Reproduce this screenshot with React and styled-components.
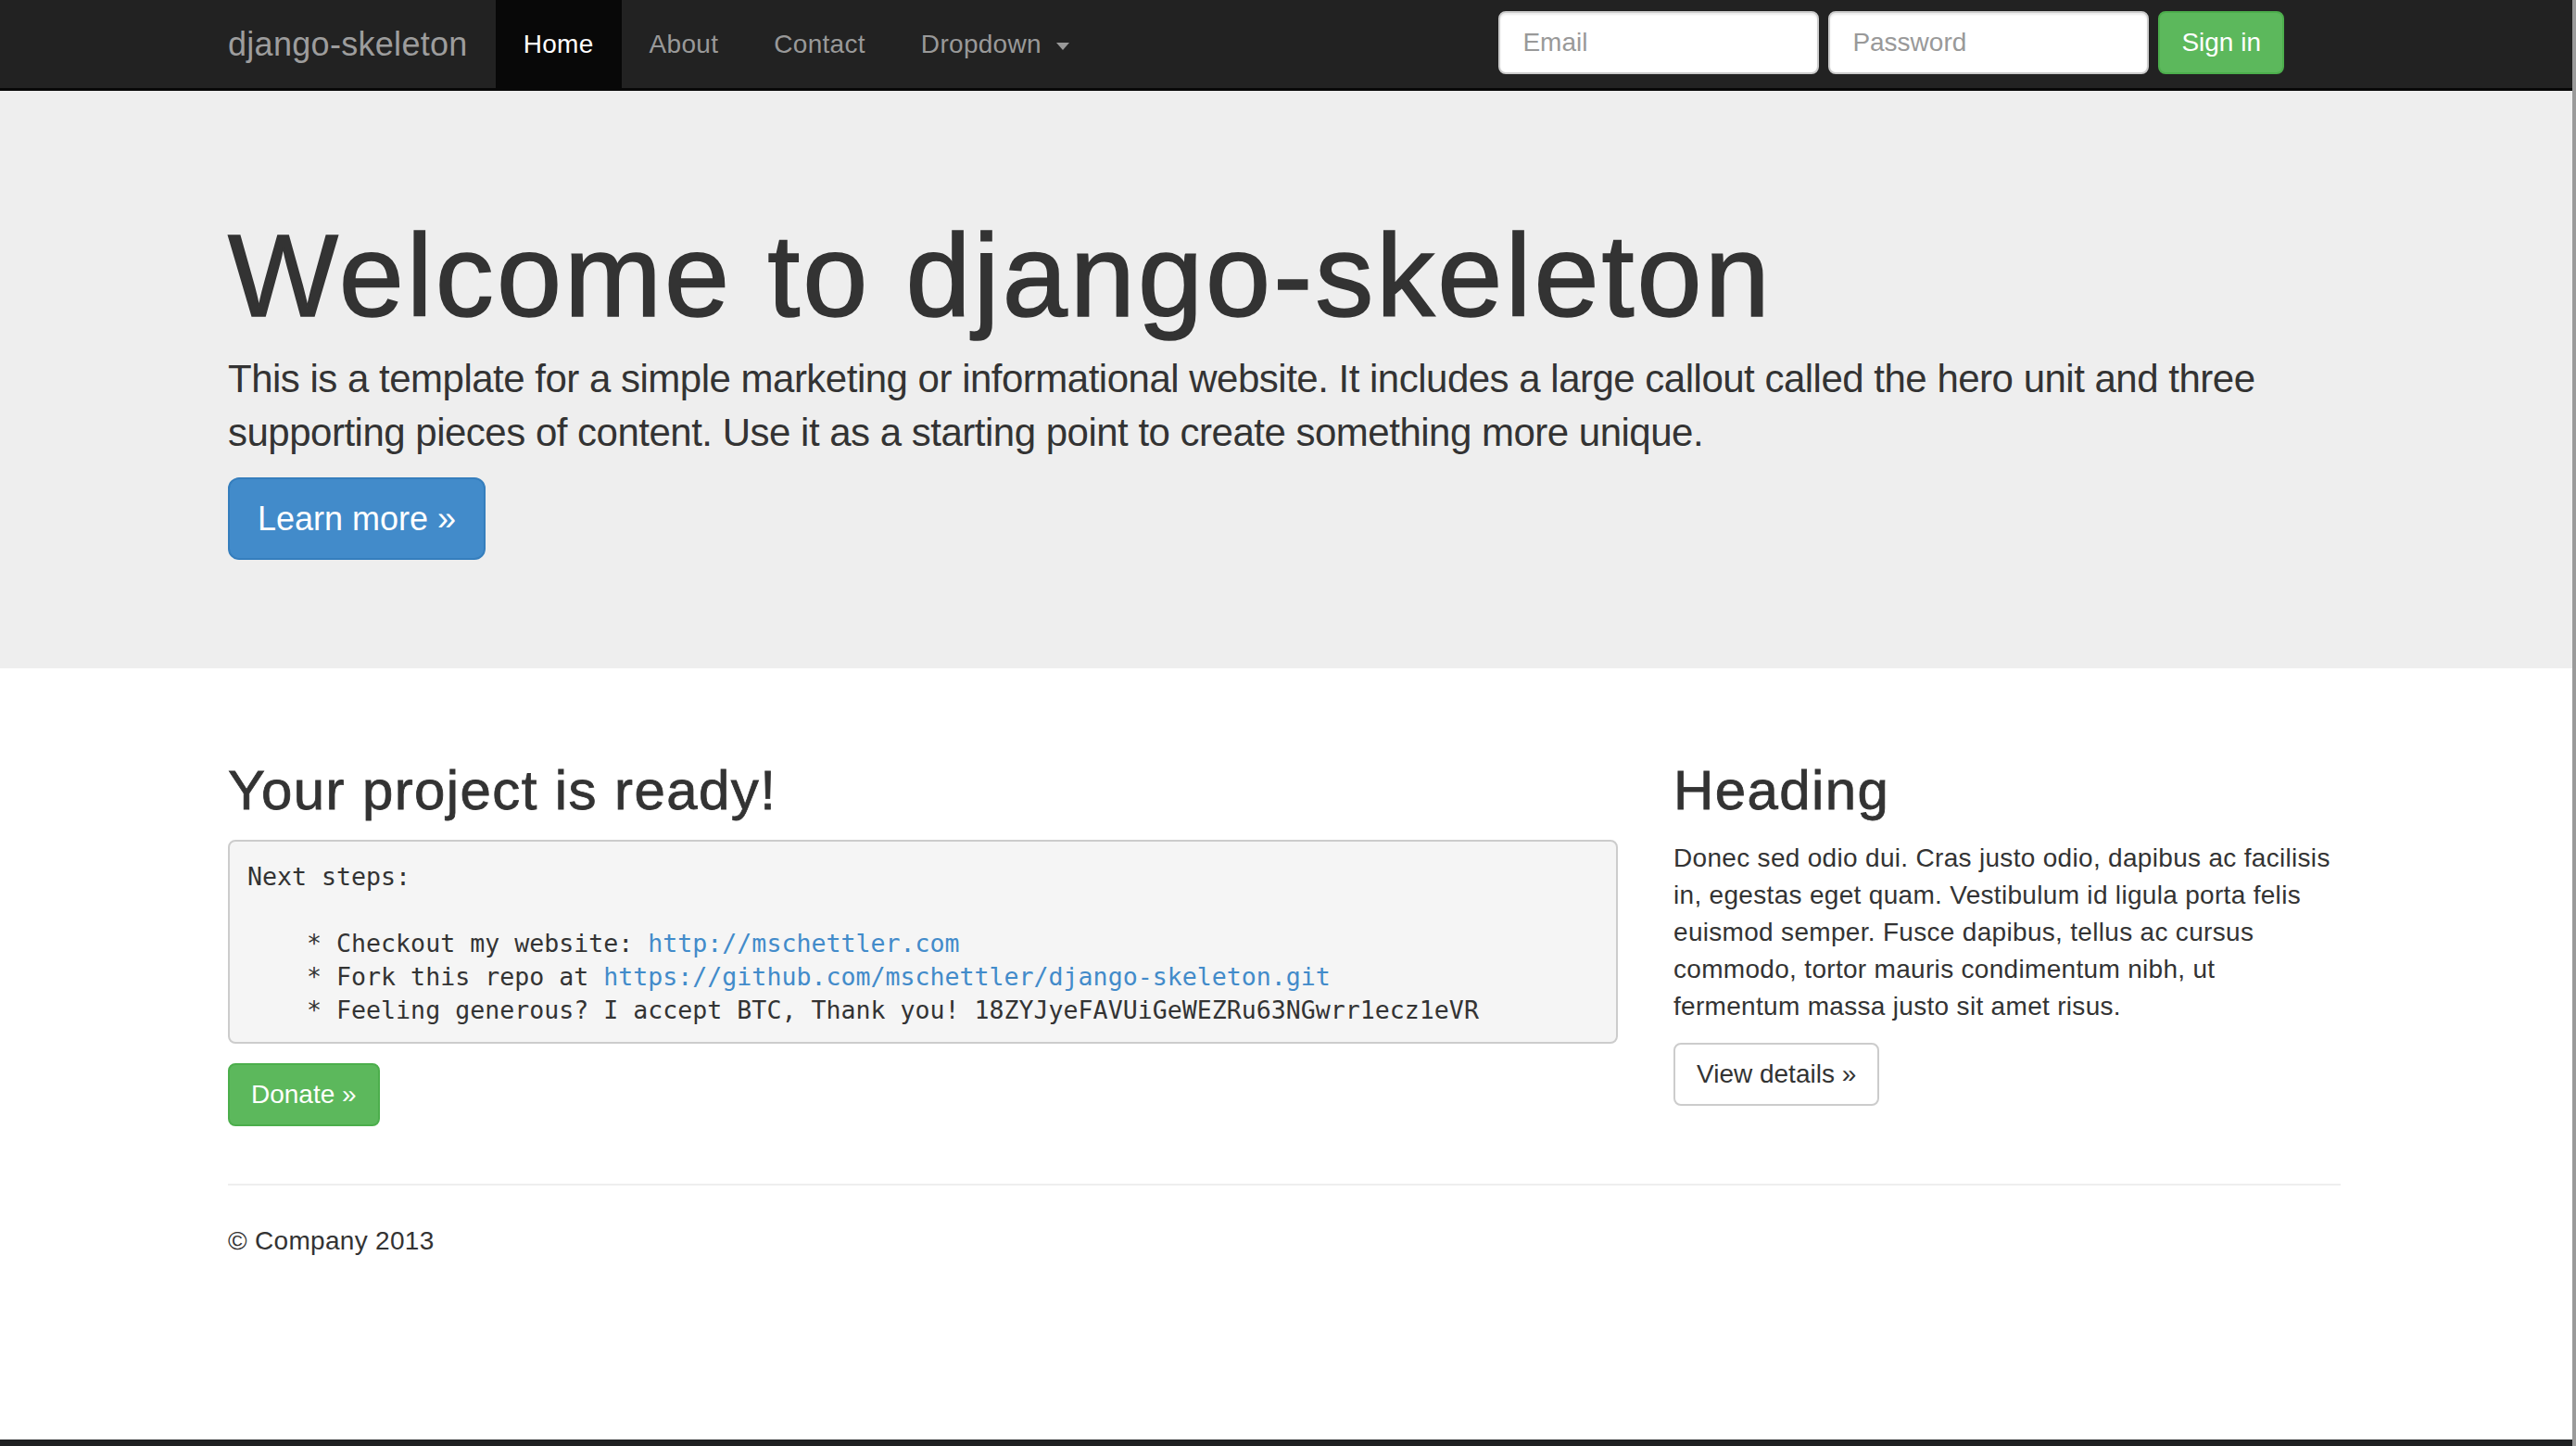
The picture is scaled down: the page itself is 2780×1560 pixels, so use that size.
import React from 'react'
import styled, { createGlobalStyle } from 'styled-components'

const GlobalStyle = createGlobalStyle`
  html, body {
    margin: 0;
    padding: 0;
    background: #fff;
  }
  body {
    font-family: "Liberation Sans", Arial, Helvetica, sans-serif;
    font-size: 28px;
    line-height: 40px;
    color: #333;
  }
  * {
    box-sizing: border-box;
  }
`

const Page = styled.div`
	display: flex;
	flex-direction: column;
	width: 2780px;
	height: 1560px;
	border-right: 4px solid #9a9a9a;
	overflow: hidden;
`

const Container = styled.div`
	width: 2340px;
	margin: 0 auto;
	padding: 0 32px 0 28px;
`

/* navbar */

const Navbar = styled.nav`
	height: 98px;
	background: #222;
	border-bottom: 3px solid #080808;
`

const NavInner = styled(Container)`
	display: flex;
	align-items: stretch;
	height: 95px;
`

const Brand = styled.a`
	display: flex;
	align-items: center;
	padding-right: 30px;
	font-size: 36px;
	color: #9d9d9d;
	text-decoration: none;
	letter-spacing: 0.3px;
`

const NavList = styled.ul`
	display: flex;
	margin: 0;
	padding: 0;
	list-style: none;
`

const NavLink = styled.li`
	display: flex;
	align-items: center;
	padding: 0 30px;
	font-size: 28px;
	letter-spacing: 0.3px;
	color: ${(p) => (p.active ? '#fff' : '#999')};
	background: ${(p) => (p.active ? '#080808' : 'transparent')};
`

const Caret = styled.span`
	display: inline-block;
	width: 0;
	height: 0;
	margin-left: 16px;
	margin-top: 4px;
	border-top: 8px solid #999;
	border-left: 7px solid transparent;
	border-right: 7px solid transparent;
`

const NavForm = styled.form`
	display: flex;
	gap: 10px;
	align-items: flex-start;
	margin-left: auto;
	margin-right: 61px;
	padding-top: 12px;
`

const Input = styled.input`
	width: 346px;
	height: 68px;
	padding: 12px 24px;
	font-family: inherit;
	font-size: 28px;
	color: #555;
	background: #fff;
	border: 2px solid #ccc;
	border-radius: 8px;
	box-shadow: inset 0 2px 2px rgba(0, 0, 0, 0.075);
	&::placeholder {
		color: #999;
	}
`

const Button = styled.button`
	display: inline-block;
	height: ${(p) => (p.large ? '89px' : '68px')};
	padding: ${(p) => (p.large ? '0 30px' : '0 23px')};
	font-family: inherit;
	font-size: ${(p) => (p.large ? '36px' : '28px')};
	line-height: 1;
	color: ${(p) => (p.variant === 'default' ? '#333' : '#fff')};
	background: ${(p) =>
		p.variant === 'primary' ? '#428bca' : p.variant === 'success' ? '#5cb85c' : '#fff'};
	border: 2px solid
		${(p) =>
			p.variant === 'primary' ? '#357ebd' : p.variant === 'success' ? '#4cae4c' : '#ccc'};
	border-radius: ${(p) => (p.large ? '12px' : '8px')};
	cursor: pointer;
`

/* jumbotron */

const Jumbotron = styled.section`
	background: #eee;
	padding: 96px 0 117px;
`

const HeroTitle = styled.h1`
	margin: 35px 0 11px;
	font-size: 126px;
	line-height: 138px;
	font-weight: 400;
	letter-spacing: 3.05px;
	-webkit-text-stroke: 1.6px #333;
	color: #333;
`

const Lead = styled.p`
	margin: 0 0 19px;
	padding-top: 2px;
	font-size: 42px;
	line-height: 58px;
	letter-spacing: -0.5px;
	color: #333;
`

/* columns */

const Row = styled.div`
	display: grid;
	grid-template-columns: 1500px 720px;
	column-gap: 60px;
	padding-top: 99px;
`

const Col = styled.div`
	display: flex;
	flex-direction: column;
	align-items: flex-start;
`

const SectionTitle = styled.h2`
	margin: 0 0 20px;
	font-size: 60px;
	line-height: 66px;
	font-weight: 400;
	letter-spacing: 1.4px;
	-webkit-text-stroke: 0.8px #333;
`

const Pre = styled.pre`
	align-self: stretch;
	margin: 0 0 21px;
	padding: 20px 19px 16px;
	font-family: "DejaVu Sans Mono", "Liberation Mono", monospace;
	font-size: 26.6px;
	line-height: 36px;
	color: #333;
	background: #f5f5f5;
	border: 2px solid #ccc;
	border-radius: 8px;
	white-space: pre;
`

const Link = styled.a`
	color: #428bca;
	text-decoration: none;
`

const Text = styled.p`
	margin: 0 0 19px;
	font-size: 28px;
	line-height: 40px;
	letter-spacing: 0.31px;
`

const Divider = styled.hr`
	margin: 62px 0 40px;
	border: 0;
	border-top: 2px solid #eee;
`

const Footer = styled.footer`
	font-size: 28px;
	line-height: 40px;
	letter-spacing: 0.3px;
`

const Spacer = styled.div`
	flex: 1;
`

const WindowEdge = styled.div`
	height: 7px;
	background: #1f2022;
`

const App = () => {
	return (
		<Page>
			<GlobalStyle />
			<Navbar>
				<NavInner>
					<Brand href="#">django-skeleton</Brand>
					<NavList>
						<NavLink active>Home</NavLink>
						<NavLink>About</NavLink>
						<NavLink>Contact</NavLink>
						<NavLink>
							Dropdown <Caret />
						</NavLink>
					</NavList>
					<NavForm onSubmit={(e) => e.preventDefault()}>
						<Input type="text" placeholder="Email" />
						<Input type="password" placeholder="Password" />
						<Button variant="success">Sign in</Button>
					</NavForm>
				</NavInner>
			</Navbar>

			<Jumbotron>
				<Container>
					<HeroTitle>Welcome to django-skeleton</HeroTitle>
					<Lead>
						This is a template for a simple marketing or informational website. It includes a large
						callout called the hero unit and three supporting pieces of content. Use it as a starting
						point to create something more unique.
					</Lead>
					<Button large variant="primary">
						Learn more &raquo;
					</Button>
				</Container>
			</Jumbotron>

			<Container>
				<Row>
					<Col>
						<SectionTitle>Your project is ready!</SectionTitle>
						<Pre>
							{'Next steps:\n\n    * Checkout my website: '}
							<Link href="#">http://mschettler.com</Link>
							{'\n    * Fork this repo at '}
							<Link href="#">https://github.com/mschettler/django-skeleton.git</Link>
							{'\n    * Feeling generous? I accept BTC, Thank you! 18ZYJyeFAVUiGeWEZRu63NGwrr1ecz1eVR'}
						</Pre>
						<Button variant="success">Donate &raquo;</Button>
					</Col>
					<Col>
						<SectionTitle>Heading</SectionTitle>
						<Text>
							Donec sed odio dui. Cras justo odio, dapibus ac facilisis in, egestas eget quam.
							Vestibulum id ligula porta felis euismod semper. Fusce dapibus, tellus ac cursus
							commodo, tortor mauris condimentum nibh, ut fermentum massa justo sit amet risus.
						</Text>
						<Button variant="default">View details &raquo;</Button>
					</Col>
				</Row>
				<Divider />
				<Footer>&copy; Company 2013</Footer>
			</Container>

			<Spacer />
			<WindowEdge />
		</Page>
	)
}

export default App
